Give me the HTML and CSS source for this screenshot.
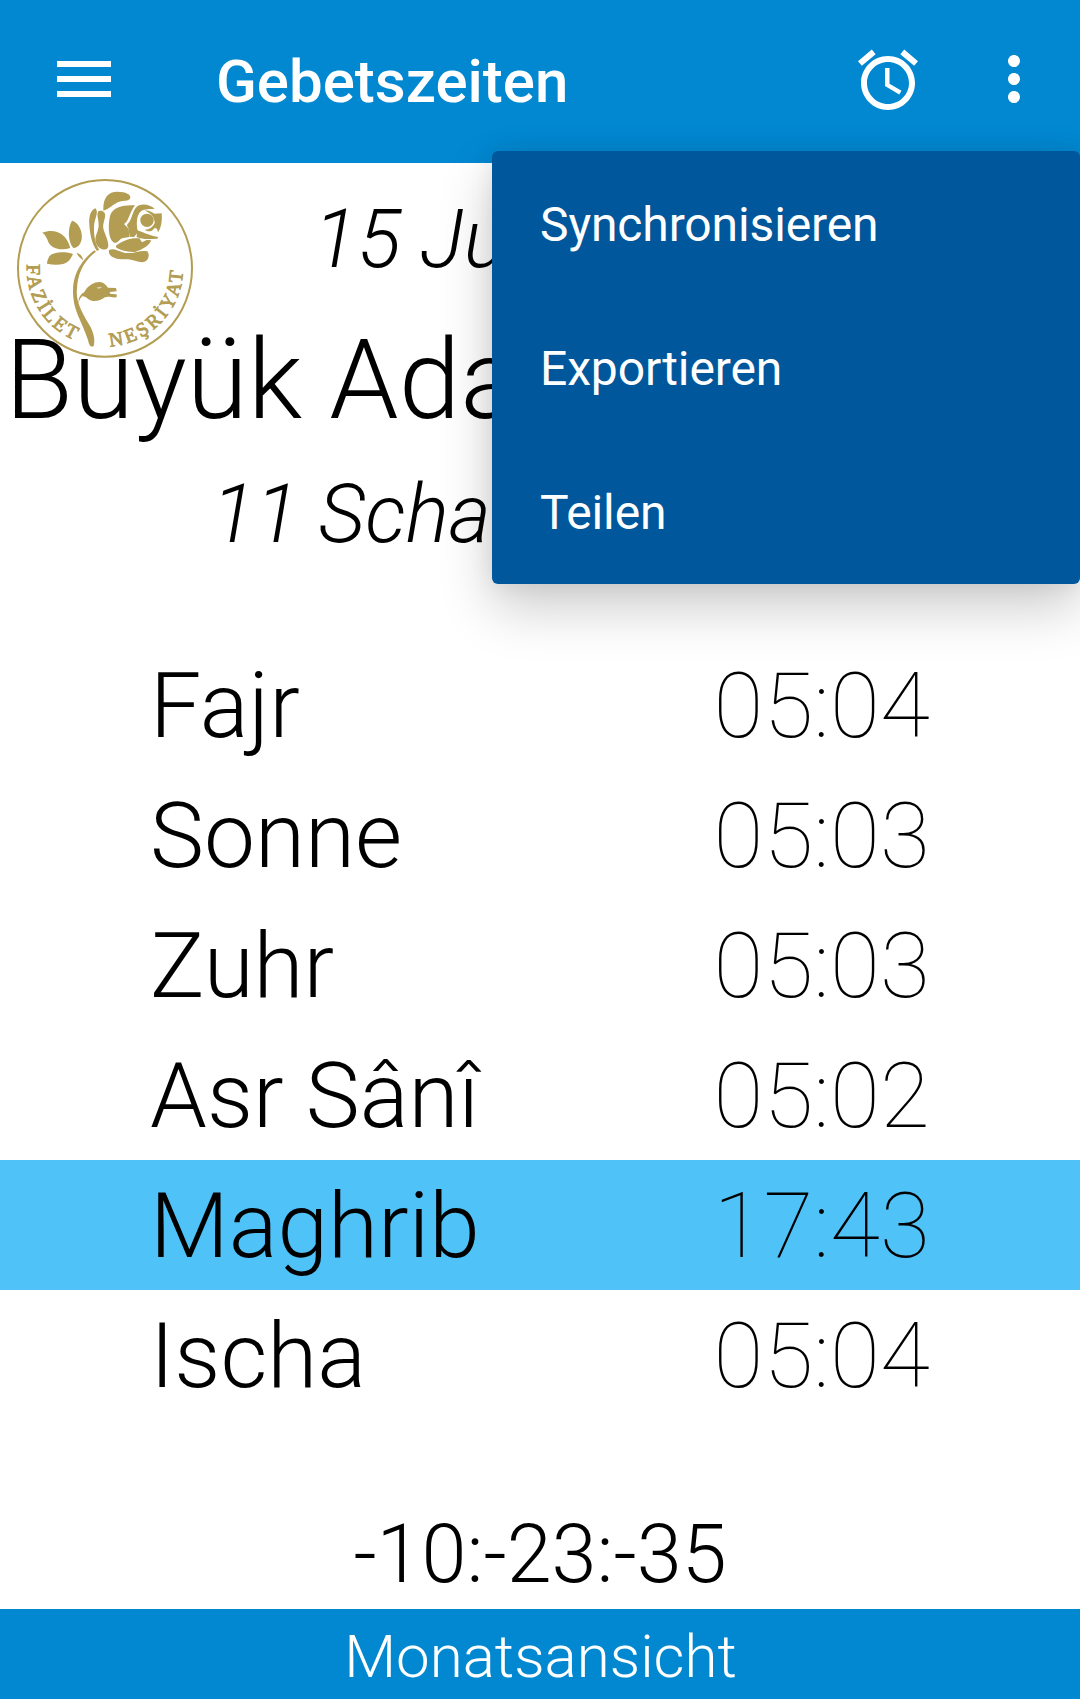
FILE: index.html
```html
<!DOCTYPE html>
<html lang="de">
<head>
<meta charset="utf-8">
<title>Gebetszeiten</title>
<link rel="stylesheet" href="styles.css">
</head>
<body>
<div class="screen">
  <header class="appbar">
    <svg class="icon icon-menu" viewBox="0 0 24 24"><path d="M3 18h18v-2H3v2zm0-5h18v-2H3v2zm0-7v2h18V6H3z"/></svg>
    <h1 class="title">Gebetszeiten</h1>
    <svg class="icon icon-alarm" viewBox="0 0 24 24"><path d="M22 5.72l-4.6-3.86-1.29 1.53 4.6 3.86L22 5.72zM7.88 3.39L6.6 1.86 2 5.71l1.29 1.53 4.59-3.85zM12.5 8H11v6l4.75 2.85.75-1.23-4-2.37V8zM12 4c-4.97 0-9 4.03-9 9s4.02 9 9 9c4.97 0 9-4.03 9-9s-4.03-9-9-9zm0 16c-3.87 0-7-3.13-7-7s3.13-7 7-7 7 3.13 7 7-3.13 7-7 7z"/></svg>
    <svg class="icon icon-more" viewBox="0 0 24 24"><path d="M12 8c1.1 0 2-.9 2-2s-.9-2-2-2-2 .9-2 2 .9 2 2 2zm0 2c-1.1 0-2 .9-2 2s.9 2 2 2 2-.9 2-2-.9-2-2-2zm0 6c-1.1 0-2 .9-2 2s.9 2 2 2 2-.9 2-2-.9-2-2-2z"/></svg>
  </header>

  <section class="info">
    <p class="date gregorian">15 Juli 2016</p>
    <p class="place">Büyük Ada</p>
    <p class="date hijri">11 Schawwal 1437</p>
    <svg class="logo" viewBox="0 0 660 630">
      <defs>
        <path id="arc-left" d="M81 313A234 234 0 0 0 228 542"/>
        <path id="arc-right" d="M330 559A234 234 0 0 0 549 327"/>
      </defs>
      <ellipse class="ring" cx="315" cy="325" rx="261" ry="265"/>
      <path d="M310 146C310 112 325 95 352 95C378 95 393 104 391 113C388 124 372 121 358 125C340 131 330 145 310 152Z"/>
      <path d="M287 145C272 150 266 168 268 195C270 225 276 252 290 272L298 270C286 250 281 228 282 200C283 175 297 160 287 145Z"/>
      <path d="M296 153C308 150 318 157 315 172C311 190 306 198 313 215C322 238 332 262 318 268C304 271 292 262 287 246C283 228 296 215 296 195C296 175 288 162 296 153Z"/>
      <path d="M405 136C370 134 340 141 331 165C324 190 325 225 334 240C342 252 352 250 358 241C364 233 376 233 388 231L386 206L372 192C386 186 388 158 405 136Z"/>
      <path d="M464 147C450 131 418 129 409 142C398 154 397 172 388 186C382 192 378 196 385 203L389 230L402 231L414 216C409 195 409 174 418 159C426 147 444 146 464 147Z"/>
      <circle cx="441" cy="181" r="20"/>
      <path d="M434 152C448 150 456 158 464 161L485 160C487 185 483 205 474 217C472 205 466 201 461 207C455 216 444 216 434 209C450 210 459 199 464 190C464 170 452 158 434 152Z"/>
      <path d="M411 211C430 216 440 225 475 231L472 236C450 236 430 240 410 231Z"/>
      <path d="M348 257C370 240 395 232 418 235L426 247L440 240L454 241C448 256 430 268 405 276C380 277 358 270 348 262Z"/>
      <path d="M327 270C342 264 352 272 372 278C400 284 420 268 442 274C450 285 446 302 432 306C415 309 400 296 372 298C345 298 324 290 327 270Z"/>
      <path d="M127 218C160 205 198 215 211 264C185 272 155 268 145 246C141 236 138 226 127 218Z"/>
      <path d="M216 182C238 186 254 226 241 250C236 260 228 264 220 264C204 245 202 205 216 182Z"/>
      <path d="M219 282C200 274 160 274 148 289C143 298 141 306 141 311C165 317 192 316 206 303C213 296 215 289 219 282Z"/>
      <path d="M230 279C239 280 247 288 250 301C242 295 234 289 230 279Z"/>
      <path d="M283 271C238 305 218 350 219 395C220 455 245 480 264 540C268 560 274 562 281 558C287 535 278 510 265 490C240 445 227 420 231 385C233 345 248 305 288 275Z"/>
      <path fill-rule="evenodd" d="M236 421C238 406 246 401 253 396C264 376 282 366 299 366C310 367 317 374 324 383L348 384L350 394L330 396C326 402 334 402 350 403L350 412C335 414 325 407 315 412C300 424 280 426 268 419C260 414 254 408 246 409C240 416 237 424 234 430ZM290 383C296 387 302 385 305 380C300 382 295 382 290 383Z"/>
      <text class="logo-text"><textPath href="#arc-left" textLength="284">FAZİLET</textPath></text>
      <text class="logo-text"><textPath href="#arc-right" textLength="344">NEŞRİYAT</textPath></text>
    </svg>
  </section>

  <ul class="times">
    <li class="row"><span class="name">Fajr</span><span class="time">05:04</span></li>
    <li class="row"><span class="name">Sonne</span><span class="time">05:03</span></li>
    <li class="row"><span class="name">Zuhr</span><span class="time">05:03</span></li>
    <li class="row"><span class="name">Asr Sânî</span><span class="time">05:02</span></li>
    <li class="row active"><span class="name">Maghrib</span><span class="time">17:43</span></li>
    <li class="row"><span class="name">Ischa</span><span class="time">05:04</span></li>
  </ul>

  <p class="countdown">-10:-23:-35</p>
  <footer class="month">Monatsansicht</footer>

  <nav class="menu">
    <a class="item">Synchronisieren</a>
    <a class="item">Exportieren</a>
    <a class="item">Teilen</a>
  </nav>
</div>
</body>
</html>
```
FILE: styles.css
```css
* { box-sizing: border-box; margin: 0; padding: 0; }

body {
  background: #fff;
  color: #000;
  font-family: Roboto, "Liberation Sans", sans-serif;
}

.screen {
  position: relative;
  display: flex;
  flex-direction: column;
  width: 1080px;
  height: 1699px;
  overflow: hidden;
}

.appbar {
  display: flex;
  align-items: center;
  height: 163px;
  padding: 0 30px 0 48px;
  background: #0288d1;
  color: #fff;
}

.icon { width: 72px; height: 72px; fill: currentColor; flex: none; }
.icon-menu, .icon-more { margin-bottom: 5px; }
.icon-alarm { margin: 0 54px 3px 0; }

.title {
  flex: 1;
  padding-left: 96px;
  font-size: 60px;
  font-weight: 500;
  line-height: 70px;
}

.info {
  position: relative;
  height: 477px;
  padding-top: 29px;
  font-weight: 300;
  white-space: nowrap;
}

.date {
  font-size: 81px;
  font-style: italic;
  line-height: 96px;
  text-align: center;
}

.gregorian { padding-right: 30px; }
.hijri { padding-right: 5px; }

.place {
  margin: 27px 0 22px;
  padding-left: 5px;
  font-size: 111px;
  line-height: 130px;
}

.logo {
  position: absolute;
  left: 0;
  top: -3px;
  width: 220px;
  height: 210px;
  fill: #b29d52;
}

.ring { fill: #fff; stroke: #b29d52; stroke-width: 6; }

.logo-text { font: 400 59px "Liberation Serif", serif; stroke: #b29d52; stroke-width: 2.5; }

.times { list-style: none; }

.row {
  display: flex;
  justify-content: space-between;
  align-items: center;
  height: 130px;
  padding: 1px 150px 0;
  font-size: 91px;
  line-height: 106px;
}

.name { font-weight: 300; }
.time { font-weight: 100; letter-spacing: .2px; }
.active { background: #4fc2f8; }

.countdown {
  flex: 1;
  padding-top: 87px;
  font-size: 81px;
  font-weight: 300;
  line-height: 96px;
  text-align: center;
}

.month {
  height: 90px;
  padding: 13px 0 0 1px;
  background: #0288d1;
  color: #fff;
  font-size: 60px;
  font-weight: 300;
  line-height: 70px;
  text-align: center;
}

.menu {
  position: absolute;
  left: 492px;
  top: 151px;
  width: 588px;
  height: 432.5px;
  border-radius: 6px;
  background: #01579b;
  color: #fff;
  box-shadow: 0 24px 54px rgba(0, 0, 0, .2), 0 0 24px rgba(0, 0, 0, .08);
}

.item {
  display: flex;
  align-items: center;
  height: 144px;
  padding: 2px 48px 0;
  font-size: 48px;
  letter-spacing: -.12px;
}
```
